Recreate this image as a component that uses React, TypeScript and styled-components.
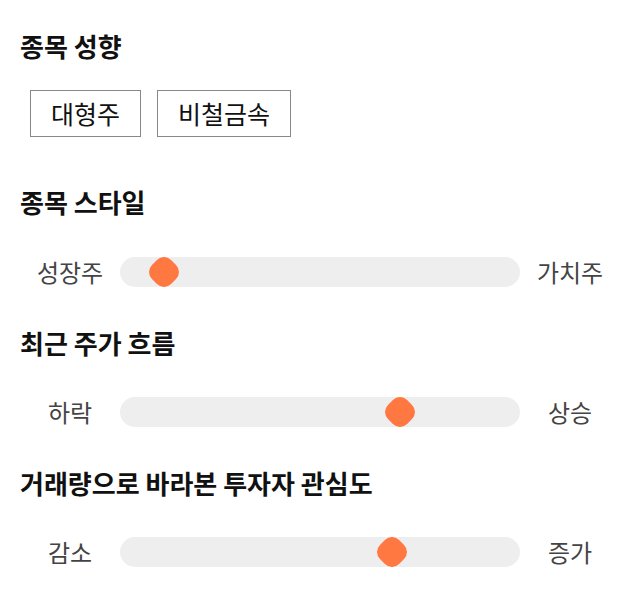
import React from "react";
import styled, { createGlobalStyle } from "styled-components";

const Global = createGlobalStyle`
  html, body { margin: 0; padding: 0; background: #fff; }
  body { font-family: "Noto Sans CJK KR", "Noto Sans", sans-serif; }
`;

const Page = styled.div`
  display: flex;
  flex-direction: column;
  padding: 31px 0 0;
`;

const Section = styled.section<{ $gap: number; $after: number }>`
  display: flex;
  flex-direction: column;
  gap: ${(p) => p.$gap}px;
  margin-bottom: ${(p) => p.$after}px;
`;

const Title = styled.h2`
  margin: 0;
  padding: 0 20px;
  font-size: 26px;
  line-height: 30px;
  font-weight: 700;
  color: #111;
`;

const Chips = styled.div`
  display: flex;
  gap: 16px;
  padding: 0 30px;
`;

const Chip = styled.button`
  height: 47px;
  padding: 0 20px;
  border: 1px solid #888;
  background: #fff;
  font-family: inherit;
  font-size: 25px;
  color: #111;
  line-height: 45px;
`;

const SliderRow = styled.div`
  display: grid;
  grid-template-columns: 100px 1fr 100px;
  align-items: center;
  padding: 0 20px;
  height: 30px;
`;

const EndLabel = styled.span`
  text-align: center;
  font-size: 24px;
  color: #444;
  line-height: 30px;
`;

const Track = styled.div`
  position: relative;
  height: 30px;
  border-radius: 15px;
  background: #eeeeee;
`;

const Knob = styled.div`
  position: absolute;
  top: 50%;
  width: 27px;
  height: 27px;
  border-radius: 10px;
  background: #ff7741;
  transform: translate(-50%, -50%) rotate(45deg);
`;

function Slider({ left, right, value }: { left: string; right: string; value: number }) {
  return (
    <SliderRow>
      <EndLabel>{left}</EndLabel>
      <Track>
        <Knob style={{ left: `${value}%` }} />
      </Track>
      <EndLabel>{right}</EndLabel>
    </SliderRow>
  );
}

export default function App() {
  return (
    <>
      <Global />
      <Page>
        <Section $gap={29} $after={50}>
          <Title>종목 성향</Title>
          <Chips>
            <Chip>대형주</Chip>
            <Chip>비철금속</Chip>
          </Chips>
        </Section>
        <Section $gap={40} $after={41}>
          <Title>종목 스타일</Title>
          <Slider left="성장주" right="가치주" value={11} />
        </Section>
        <Section $gap={39} $after={41}>
          <Title>최근 주가 흐름</Title>
          <Slider left="하락" right="상승" value={70} />
        </Section>
        <Section $gap={39} $after={0}>
          <Title>거래량으로 바라본 투자자 관심도</Title>
          <Slider left="감소" right="증가" value={68} />
        </Section>
      </Page>
    </>
  );
}
